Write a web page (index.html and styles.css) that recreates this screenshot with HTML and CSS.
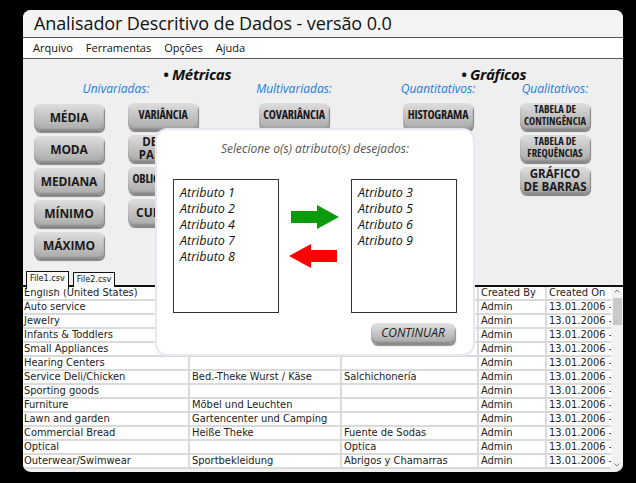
FILE: index.html
```html
<!DOCTYPE html>
<html lang="pt">
<head>
<meta charset="utf-8">
<title>Analisador Descritivo de Dados</title>
<link rel="stylesheet" href="styles.css">
</head>
<body>
<div class="window">
  <div class="titlebar">Analisador Descritivo de Dados - versão 0.0</div>
  <div class="menubar">
    <span>Arquivo</span><span>Ferramentas</span><span>Opções</span><span>Ajuda</span>
  </div>
  <div class="toolbar">
    <div class="sec sec-metricas">• Métricas</div>
    <div class="sec sec-graficos">• Gráficos</div>
    <div class="sub sub-uni">Univariadas:</div>
    <div class="sub sub-multi">Multivariadas:</div>
    <div class="sub sub-quant">Quantitativos:</div>
    <div class="sub sub-qual">Qualitativos:</div>
    <div class="col col-a">
      <div class="btn b-big">MÉDIA</div>
      <div class="btn b-big">MODA</div>
      <div class="btn b-big">MEDIANA</div>
      <div class="btn b-big">MÍNIMO</div>
      <div class="btn b-big">MÁXIMO</div>
    </div>
    <div class="col col-b">
      <div class="btn b-cond">VARIÂNCIA</div>
      <div class="btn b-two-wide">DESVIO<br>PADRÃO</div>
      <div class="btn b-cond">OBLIQUIDADE</div>
      <div class="btn b-big">CURTOSE</div>
    </div>
    <div class="col col-c">
      <div class="btn b-cond">COVARIÂNCIA</div>
    </div>
    <div class="col col-d">
      <div class="btn b-cond">HISTOGRAMA</div>
    </div>
    <div class="col col-e">
      <div class="btn b-two">TABELA DE<br>CONTINGÊNCIA</div>
      <div class="btn b-two">TABELA DE<br>FREQUÊNCIAS</div>
      <div class="btn b-two-wide">GRÁFICO<br>DE BARRAS</div>
    </div>
  </div>
  <div class="tabs">
    <div class="tab active">File1.csv</div>
    <div class="tab">File2.csv</div>
  </div>
  <div class="grid-wrap">
    <div class="grid">
      <div class="row"><div class="c c1">English (United States)</div><div class="c c2"></div><div class="c c3"></div><div class="c c4">Created By</div><div class="c c5">Created On</div></div>
      <div class="row"><div class="c c1">Auto service</div><div class="c c2"></div><div class="c c3"></div><div class="c c4">Admin</div><div class="c c5">13.01.2006 -</div></div>
      <div class="row"><div class="c c1">Jewelry</div><div class="c c2"></div><div class="c c3"></div><div class="c c4">Admin</div><div class="c c5">13.01.2006 -</div></div>
      <div class="row"><div class="c c1">Infants &amp; Toddlers</div><div class="c c2"></div><div class="c c3"></div><div class="c c4">Admin</div><div class="c c5">13.01.2006 -</div></div>
      <div class="row"><div class="c c1">Small Appliances</div><div class="c c2"></div><div class="c c3"></div><div class="c c4">Admin</div><div class="c c5">13.01.2006 -</div></div>
      <div class="row"><div class="c c1">Hearing Centers</div><div class="c c2"></div><div class="c c3"></div><div class="c c4">Admin</div><div class="c c5">13.01.2006 -</div></div>
      <div class="row"><div class="c c1">Service Deli/Chicken</div><div class="c c2">Bed.-Theke Wurst / Käse</div><div class="c c3">Salchichonería</div><div class="c c4">Admin</div><div class="c c5">13.01.2006 -</div></div>
      <div class="row"><div class="c c1">Sporting goods</div><div class="c c2"></div><div class="c c3"></div><div class="c c4">Admin</div><div class="c c5">13.01.2006 -</div></div>
      <div class="row"><div class="c c1">Furniture</div><div class="c c2">Möbel und Leuchten</div><div class="c c3"></div><div class="c c4">Admin</div><div class="c c5">13.01.2006 -</div></div>
      <div class="row"><div class="c c1">Lawn and garden</div><div class="c c2">Gartencenter und Camping</div><div class="c c3"></div><div class="c c4">Admin</div><div class="c c5">13.01.2006 -</div></div>
      <div class="row"><div class="c c1">Commercial Bread</div><div class="c c2">Heiße Theke</div><div class="c c3">Fuente de Sodas</div><div class="c c4">Admin</div><div class="c c5">13.01.2006 -</div></div>
      <div class="row"><div class="c c1">Optical</div><div class="c c2"></div><div class="c c3">Optica</div><div class="c c4">Admin</div><div class="c c5">13.01.2006 -</div></div>
      <div class="row"><div class="c c1">Outerwear/Swimwear</div><div class="c c2">Sportbekleidung</div><div class="c c3">Abrigos y Chamarras</div><div class="c c4">Admin</div><div class="c c5">13.01.2006 -</div></div>
    </div>
    <div class="scrollbar">
      <svg class="caret" width="12" height="8" viewBox="0 0 12 8"><path d="M3.5 5.5 L6 3 L8.5 5.5" fill="none" stroke="#777" stroke-width="1"/></svg>
      <div class="thumb"></div>
      <div class="track"></div>
      <svg class="caret" width="12" height="8" viewBox="0 0 12 8"><path d="M3.5 2.5 L6 5 L8.5 2.5" fill="none" stroke="#777" stroke-width="1"/></svg>
    </div>
  </div>

  <div class="dialog">
    <div class="dlg-title">Selecione o(s) atributo(s) desejados:</div>
    <div class="dlg-body">
      <div class="list">
        <div>Atributo 1</div>
        <div>Atributo 2</div>
        <div>Atributo 4</div>
        <div>Atributo 7</div>
        <div>Atributo 8</div>
      </div>
      <div class="arrows">
        <svg class="arrow" width="48" height="24" viewBox="0 0 48 24"><polygon points="0,6 26,6 26,0 48,12 26,24 26,18 0,18" fill="#0a9a0a"/></svg>
        <svg class="arrow arrow-left" width="48" height="24" viewBox="0 0 48 24"><polygon points="48,6 22,6 22,0 0,12 22,24 22,18 48,18" fill="#ff0000"/></svg>
      </div>
      <div class="list">
        <div>Atributo 3</div>
        <div>Atributo 5</div>
        <div>Atributo 6</div>
        <div>Atributo 9</div>
      </div>
    </div>
    <div class="dlg-foot">
      <div class="btn-continue">CONTINUAR</div>
    </div>
  </div>
</div>
</body>
</html>
```

FILE: styles.css
```css
* { box-sizing: border-box; }
html, body { margin: 0; padding: 0; }
body {
  background: #000;
  width: 636px;
  height: 483px;
  overflow: hidden;
  font-family: "Open Sans", "DejaVu Sans", sans-serif;
  color: #111;
}
.window {
  position: relative;
  margin: 10px 0 0 23px;
  width: 600px;
  height: 462px;
  background: #efefef;
  border-radius: 8px;
  overflow: hidden;
}
.titlebar {
  height: 28px;
  padding-left: 11px;
  background: #f4f4f4;
  border-bottom: 1px solid #555;
  font-size: 18px;
  line-height: 27px;
  letter-spacing: -0.1px;
  white-space: nowrap;
}
.menubar {
  display: flex;
  gap: 13px;
  height: 21px;
  padding-left: 10px;
  background: #fff;
  border-bottom: 1px solid #555;
  font-size: 11px;
  line-height: 20px;
}
.toolbar {
  display: grid;
  grid-template-columns: 70px 24px 70px 61px 70px 74px 70px 47px 70px;
  grid-template-rows: 16px 14px auto;
  padding: 7px 0 0 11px;
  height: 212px;
}
.sec {
  grid-row: 1;
  font-size: 15px;
  font-weight: 700;
  font-style: italic;
  line-height: 16px;
  letter-spacing: -0.3px;
  white-space: nowrap;
}
.sec-metricas { grid-column: 1 / 6; padding-left: 129px; }
.sec-graficos { grid-column: 7 / 10; padding-left: 58px; }
.sub {
  grid-row: 2;
  display: flex;
  justify-content: center;
  font-size: 12px;
  font-style: italic;
  line-height: 14px;
  color: #1b7be6;
  white-space: nowrap;
}
.sub-uni { grid-column: 1 / 4; }
.sub-multi { grid-column: 5; }
.sub-quant { grid-column: 7; }
.sub-qual { grid-column: 9; }
.col {
  grid-row: 3;
  display: flex;
  flex-direction: column;
  gap: 4px;
  margin-top: 6px;
}
.col-a { grid-column: 1; margin-top: 7px; }
.col-b { grid-column: 3; }
.col-c { grid-column: 5; }
.col-d { grid-column: 7; }
.col-e { grid-column: 9; }
.btn {
  width: 70px;
  height: 28px;
  border-radius: 6px;
  background: linear-gradient(#e0e0e0, #c6c6c6 45%, #a9a9a9);
  box-shadow: inset 0 1px 0 #f2f2f2, inset 0 -2px 2px rgba(0,0,0,0.18), 1px 2px 1px rgba(0,0,0,0.45);
  display: flex;
  align-items: center;
  justify-content: center;
  text-align: center;
  color: #1a1a1a;
  font-weight: 700;
  white-space: nowrap;
  overflow: hidden;
}
.b-big { font-size: 12px; letter-spacing: -0.1px; }
.b-cond {
  font-size: 12px;
  font-stretch: 75%;
  letter-spacing: -0.2px;
  padding-bottom: 3px;
}
.b-two {
  font-size: 10.5px;
  font-stretch: 75%;
  line-height: 12px;
  padding-bottom: 2px;
}
.b-two-wide { font-size: 11.5px; line-height: 13px; padding-bottom: 1px; }

.tabs {
  display: flex;
  gap: 4px;
  height: 16px;
  padding-left: 3px;
  border-bottom: 2px solid #111;
}
.tab {
  height: 15px;
  margin-top: 1px;
  padding: 0 3px;
  border: 1.5px solid #111;
  border-bottom: none;
  background: #f9f9f9;
  font-family: "DejaVu Sans Condensed", sans-serif;
  font-size: 9px;
  line-height: 13px;
}
.tab.active {
  margin-top: 0;
  height: 18px;
  margin-bottom: -2px;
  position: relative;
}
.grid-wrap {
  display: flex;
  height: 182px;
}
.grid {
  width: 588px;
  background: #fff;
}
.row {
  display: flex;
  height: 14px;
  border-bottom: 2px solid #dadada;
}
.c {
  height: 12px;
  padding-left: 1px;
  border-right: 2px solid #dadada;
  font-family: "DejaVu Sans Condensed", "DejaVu Sans", sans-serif;
  font-size: 11px;
  line-height: 12px;
  color: #222;
  white-space: nowrap;
  overflow: hidden;
}
.c1 { width: 167px; }
.c2 { width: 152px; padding-left: 2px; }
.c3 { width: 137px; padding-left: 2px; }
.c4 { width: 68px; padding-left: 2px; }
.c5 { width: 64px; padding-left: 2px; border-right: none; }
.scrollbar {
  width: 12px;
  background: #f2f2f2;
  display: flex;
  flex-direction: column;
  align-items: center;
}
.caret { flex: none; }
.thumb {
  width: 9px;
  height: 27px;
  margin-top: 3px;
  background: #c9c9c9;
}
.track { flex: 1; }

.dialog {
  position: absolute;
  left: 134px;
  top: 120px;
  width: 316px;
  height: 224px;
  background: #fff;
  border-radius: 10px;
  box-shadow: 0 0 0 2px #ebe5f1;
  display: flex;
  flex-direction: column;
}
.dlg-title {
  margin-top: 10px;
  text-align: center;
  font-size: 12px;
  font-style: italic;
  line-height: 18px;
  color: #555;
}
.dlg-body {
  display: flex;
  margin-top: 21px;
  padding: 0 16px;
  height: 134px;
}
.list {
  width: 106px;
  height: 134px;
  border: 1px solid #333;
  padding: 5px 0 0 6px;
  font-size: 12.5px;
  font-style: italic;
  line-height: 16px;
  color: #111;
}
.arrows {
  flex: 1;
  display: flex;
  flex-direction: column;
  align-items: center;
  padding-top: 26px;
  gap: 15px;
}
.arrow { display: block; }
.arrow-left { margin-right: 4px; }
.dlg-foot {
  display: flex;
  justify-content: flex-end;
  padding-right: 18px;
  margin-top: 10px;
}
.btn-continue {
  width: 84px;
  height: 21px;
  border-radius: 6px;
  background: linear-gradient(#e2e2e2, #c4c4c4 50%, #a4a4a4);
  box-shadow: inset 0 -2px 2px rgba(0,0,0,0.18), 1px 2px 1px rgba(0,0,0,0.45);
  font-size: 12px;
  font-style: italic;
  line-height: 20px;
  text-align: center;
  color: #1a1a1a;
}
```
